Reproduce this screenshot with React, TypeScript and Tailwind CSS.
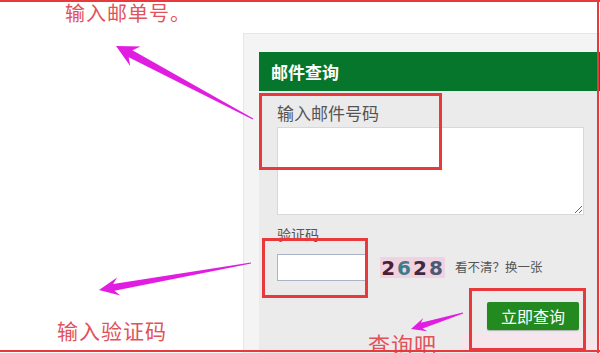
import React from 'react';

type Pt = [number, number];

// tapered arrow: thin at the tail, wide head at the tip
const arrowPoints = (tail: Pt, tip: Pt, headLen: number, headW: number, neckW: number, tailW: number) => {
  const dx = tip[0] - tail[0];
  const dy = tip[1] - tail[1];
  const len = Math.hypot(dx, dy);
  const ux = dx / len;
  const uy = dy / len;
  const nx = -uy;
  const ny = ux;
  const neck: Pt = [tip[0] - ux * headLen, tip[1] - uy * headLen];
  const back: Pt = [tip[0] - ux * headLen * 0.75, tip[1] - uy * headLen * 0.75];
  const pts: Pt[] = [
    [tail[0] + nx * tailW, tail[1] + ny * tailW],
    [back[0] + nx * neckW, back[1] + ny * neckW],
    [neck[0] + nx * headW, neck[1] + ny * headW],
    tip,
    [neck[0] - nx * headW, neck[1] - ny * headW],
    [back[0] - nx * neckW, back[1] - ny * neckW],
    [tail[0] - nx * tailW, tail[1] - ny * tailW],
  ];
  return pts.map((p) => `${p[0].toFixed(1)},${p[1].toFixed(1)}`).join(' ');
};

const Captcha: React.FC = () => (
  <div className="w-[65px] h-[21px] bg-[#f0d3e3] flex items-center justify-center gap-[1px] font-['DejaVu_Sans',sans-serif] font-bold text-[20px] leading-none tracking-[1px]">
    <span className="text-[#4a1f33]">2</span>
    <span className="text-[#3f7d86]">6</span>
    <span className="text-[#3d2a40]">2</span>
    <span className="text-[#4b5a72]">8</span>
  </div>
);

const App: React.FC = () => {
  return (
    <div className="relative w-[600px] h-[353px] overflow-hidden bg-white font-['Noto_Sans_CJK_SC',sans-serif]">
      <div className="flex h-full">
        <div className="w-[243px] shrink-0" />
        <div className="flex-1 mt-[33px] bg-[#f4f4f4] pl-[15px] pt-[18px] border-t border-l border-[#e6e6e6]">
          <div className="h-[39px] bg-[#06762c] flex items-center pl-[12px]">
            <span className="text-white font-bold text-[17px] leading-none">邮件查询</span>
          </div>
          <div className="bg-[#ebebeb] h-full pl-[18px] pr-[14px] pt-[12px]">
            <div className="text-[#555] text-[17px] leading-[20px] h-[24px]">输入邮件号码</div>
            <textarea className="block w-[307px] h-[88px] bg-white border border-[#d8d8d8] outline-none" />
            <div className="mt-[10px] mb-[11px] text-[#555] text-[14px] leading-[18px]">验证码</div>
            <div className="flex items-center">
              <input className="w-[90px] h-[27px] bg-white border border-[#aab4c6] outline-none" />
              <div className="ml-[13px]">
                <Captcha />
              </div>
              <span className="ml-[10px] text-[#555] text-[12.5px] leading-none">看不清？换一张</span>
            </div>
            <div className="flex justify-end pr-[7px] mt-[21px]">
              <button className="w-[92px] h-[28px] bg-[#238a1f] rounded-[2px] text-white text-[16px] leading-none shadow-[0_1px_1px_rgba(0,0,0,0.25)]">
                立即查询
              </button>
            </div>
          </div>
        </div>
      </div>

      {/* faded watermark strip, bottom right */}
      <div className="absolute left-[462px] top-[334px] w-[138px] h-[19px] bg-[#f6e6ec]" />

      {/* red highlight boxes */}
      <div className="absolute left-[259px] top-[93px] w-[183px] h-[77px] border-[3px] border-[#e83a3d]" />
      <div className="absolute left-[262px] top-[238px] w-[106px] h-[60px] border-[3px] border-[#e83a3d]" />
      <div className="absolute left-[469px] top-[288px] w-[117px] h-[63px] border-[3px] border-[#e83a3d]" />

      {/* annotation arrows */}
      <svg className="absolute inset-0" width="600" height="353" viewBox="0 0 600 353">
        <polygon points={arrowPoints([253, 119], [116, 46], 22, 11, 4, 0.6)} fill="#e21de2" />
        <polygon points={arrowPoints([251, 263], [99, 290], 20, 9, 3.5, 0.6)} fill="#e21de2" />
        <polygon points={arrowPoints([463, 313], [411, 329], 15, 7, 3, 0.6)} fill="#e21de2" />
      </svg>

      {/* annotation labels */}
      <span className="absolute left-[65px] top-[1px] text-[#e2525c] text-[20px] leading-[24px] tracking-[1px]">输入邮单号。</span>
      <span className="absolute left-[57px] top-[317px] text-[#e2525c] text-[21px] leading-[26px] tracking-[1px]">输入验证码</span>
      <span className="absolute left-[368px] top-[329px] text-[#e2525c] text-[22px] leading-[28px] tracking-[1px]">查询吧</span>

      {/* outer frame lines */}
      <div className="absolute left-0 top-0 w-full h-[2px] bg-[#e83a3d]" />
      <div className="absolute right-[1px] top-0 w-[2px] h-full bg-[#e83a3d]" />
      <div className="absolute left-0 top-[350px] w-full h-[2px] bg-[#e83a3d]" />
    </div>
  );
};

export default App;
